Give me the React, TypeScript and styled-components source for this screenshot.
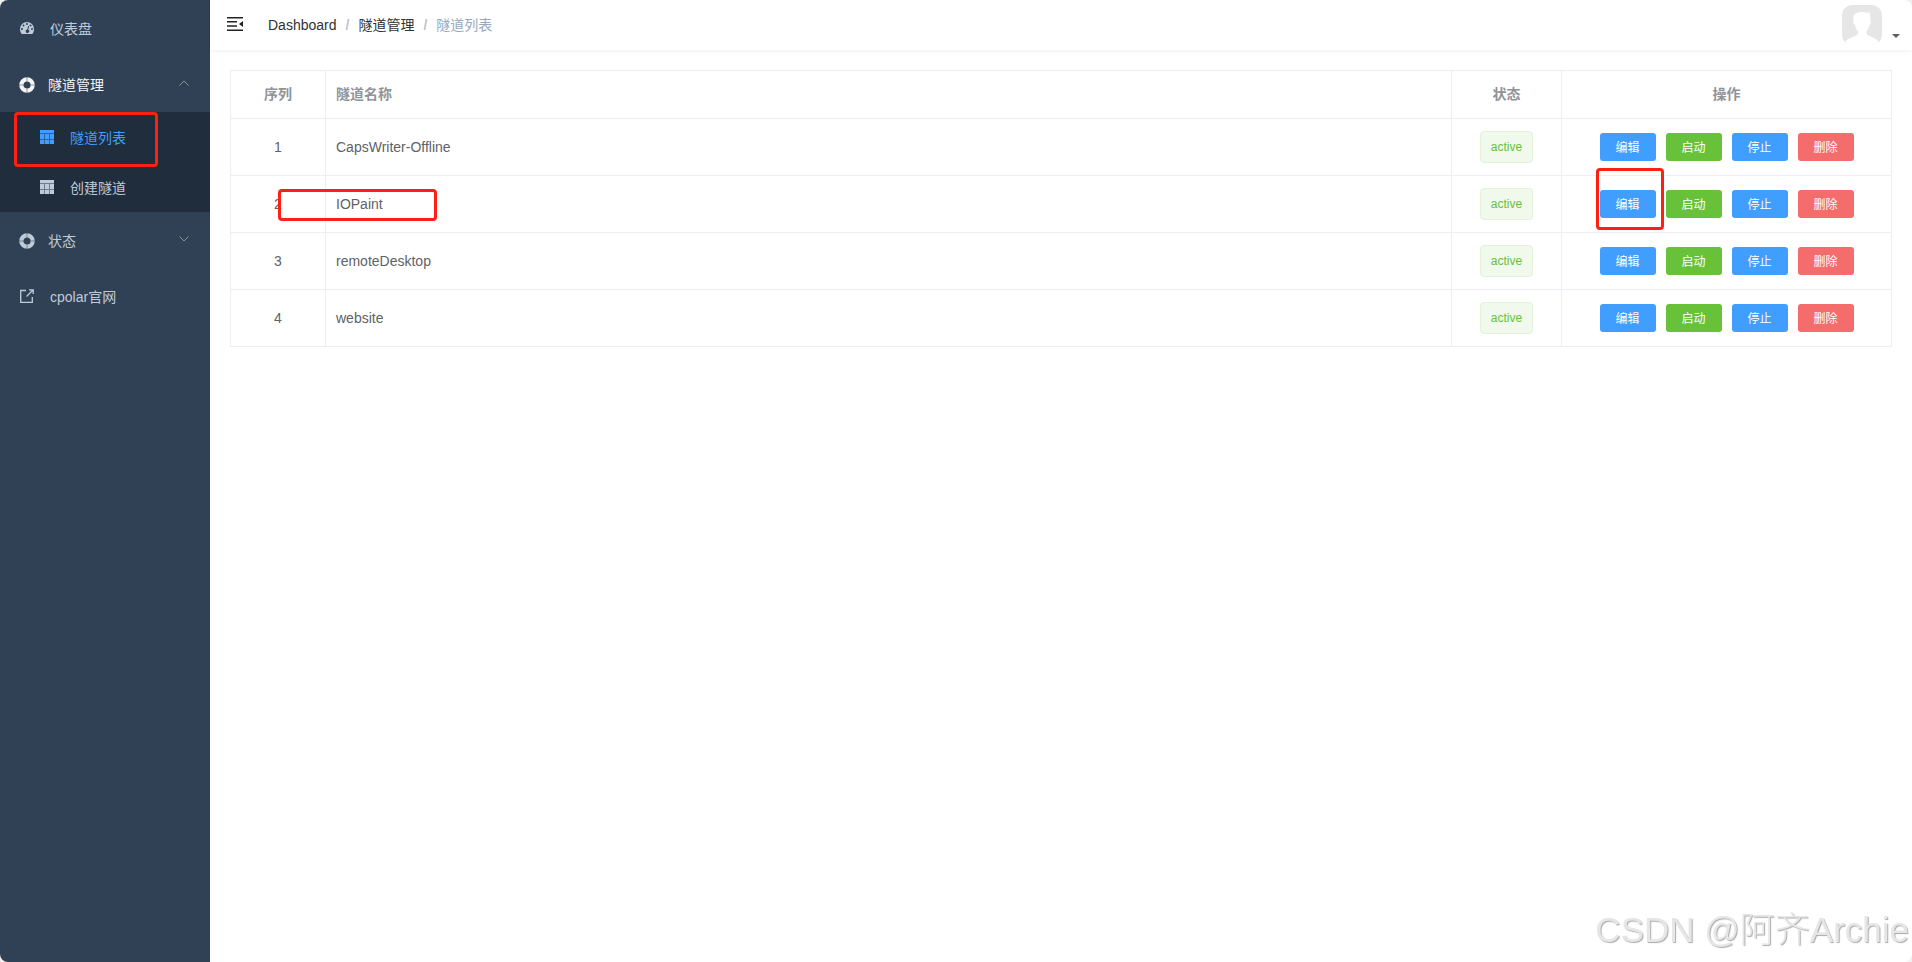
import React from "react";
import styled, { createGlobalStyle, css } from "styled-components";

const GlobalStyle = createGlobalStyle`
  *, *::before, *::after { box-sizing: border-box; }
  body {
    margin: 0;
    background: #f0f0f0;
    color: #606266;
    font-family: "Liberation Sans", "Noto Sans CJK SC", sans-serif;
    font-size: 14px;
  }
`;

const Window = styled.div`
  display: flex;
  min-height: 100vh;
  background: #fff;
  border-radius: 8px;
  overflow: hidden;
`;

const Sidebar = styled.nav`
  flex: 0 0 210px;
  background: #304156;
`;

const MenuList = styled.ul`
  margin: 0;
  padding: 0;
  list-style: none;
`;

const SubMenu = styled(MenuList)`
  background: #1f2d3d;
`;

const MenuItem = styled.li`
  position: relative;
`;

const menuEntry = css<{ $bright?: boolean; $gap?: number }>`
  display: flex;
  align-items: center;
  gap: ${(p) => p.$gap ?? 16}px;
  width: 100%;
  height: 56px;
  padding: 2px 20px 0;
  border: 0;
  background: none;
  color: ${(p) => (p.$bright ? "#f4f4f5" : "#bfcbd9")};
  font: inherit;
  line-height: 20px;
  text-align: left;
  text-decoration: none;
  cursor: pointer;
`;

const MenuLink = styled.a<{ $bright?: boolean; $gap?: number }>`${menuEntry}`;
const MenuButton = styled.button<{ $bright?: boolean; $gap?: number }>`
  ${menuEntry}
  padding-left: 19px;
`;

const SubLink = styled.a<{ $active?: boolean }>`
  display: flex;
  align-items: center;
  gap: 16px;
  height: 50px;
  padding: 2px 20px 0 40px;
  color: ${(p) => (p.$active ? "#409eff" : "#bfcbd9")};
  line-height: 20px;
  text-decoration: none;
`;

const MenuIcon = styled.svg`
  width: 14px;
  height: 14px;
  margin-bottom: 2px;
`;

const Chevron = styled.svg`
  width: 10px;
  height: 6px;
  margin: 0 1px 4px auto;
  fill: none;
  stroke: #909399;
`;

const Main = styled.main`
  flex: 1;
  min-width: 0;
`;

const Navbar = styled.header`
  display: flex;
  align-items: center;
  height: 50px;
  padding: 0 12px 0 17px;
  box-shadow: 0 1px 4px rgba(0, 21, 41, 0.08);
`;

const IconButton = styled.button`
  display: flex;
  margin-bottom: 2px;
  padding: 0;
  border: 0;
  background: none;
  color: #222;
  cursor: pointer;
`;

const Breadcrumb = styled.ol`
  display: flex;
  margin: 0 auto 0 25px;
  padding: 0;
  list-style: none;
  line-height: 20px;
`;

const Crumb = styled.li`
  color: #97a8be;

  & + &::before {
    content: "/";
    margin: 0 9px;
    color: #c0c4cc;
    font-weight: 700;
  }

  a {
    color: #303133;
    text-decoration: none;
  }
`;

const UserMenu = styled.button`
  display: flex;
  align-items: flex-end;
  gap: 10px;
  padding: 0;
  border: 0;
  background: none;
  cursor: pointer;
`;

const Caret = styled.svg`
  width: 8px;
  height: 4px;
  margin-bottom: 7px;
  fill: #5a5e66;
`;

const Content = styled.section`
  padding: 20px;
`;

const Table = styled.table`
  width: 100%;
  border-collapse: collapse;
  table-layout: fixed;
  line-height: 23px;
`;

const Col = styled.col<{ $width?: number }>`
  width: ${(p) => (p.$width ? `${p.$width}px` : "auto")};
`;

const cell = css<{ $center?: boolean }>`
  padding: 0 10px;
  border: 1px solid #ebeef5;
  text-align: ${(p) => (p.$center ? "center" : "left")};
`;

const HeadCell = styled.th<{ $center?: boolean }>`
  ${cell}
  height: 48px;
  color: #909399;
  font-weight: 700;
`;

const Cell = styled.td<{ $center?: boolean }>`
  ${cell}
  position: relative;
  height: 57px;
`;

const Tag = styled.span`
  display: inline-block;
  height: 32px;
  padding: 0 10px;
  border: 1px solid #e1f3d8;
  border-radius: 4px;
  background: #f0f9eb;
  color: #67c23a;
  font-size: 12px;
  line-height: 30px;
  vertical-align: middle;
`;

const Actions = styled.div`
  display: flex;
  justify-content: center;
  gap: 10px;
`;

const ActionSlot = styled.div`
  position: relative;
`;

const tones = { primary: "#409eff", success: "#67c23a", danger: "#f56c6c" };

const ActionButton = styled.button<{ $tone: keyof typeof tones }>`
  display: block;
  width: 56px;
  height: 28px;
  padding: 2px 0 0;
  border: 0;
  border-radius: 3px;
  background: ${(p) => tones[p.$tone]};
  color: #fff;
  font: inherit;
  font-size: 12px;
  line-height: 12px;
  cursor: pointer;
`;

const Marker = styled.span<{ $inset: string }>`
  position: absolute;
  inset: ${(p) => p.$inset};
  z-index: 1;
  border: 3px solid #fe2014;
  border-radius: 4px;
  pointer-events: none;
`;

const NameMarker = styled(Marker)`
  width: 159px;
`;

const SubMarker = styled(Marker)`
  width: 144px;
`;

const Watermark = styled.div`
  position: fixed;
  right: 3px;
  bottom: 7px;
  color: #e6e6e6;
  font-family: "Liberation Sans", "Noto Sans CJK SC", sans-serif;
  font-size: 35px;
  font-weight: 300;
  line-height: 50px;
  text-shadow: 1px 1px 1px #aaa;
  white-space: nowrap;
  pointer-events: none;
`;

const GaugeIcon = () => (
  <MenuIcon viewBox="0 0 14 14" fill="currentColor" aria-hidden="true">
    <path
      fillRule="evenodd"
      d="M7 1a7 7 0 0 0-7 7c0 1.700.5 3.300 1.300 4.600.1.200.3.300.5.300h10.400c.2 0 .4-.1.500-.300A8 8 0 0 0 14 8a7 7 0 0 0-7-7zM7 2a1 1 0 1 1 0 2 1 1 0 0 1 0-2zM3.500 3.500a1 1 0 1 1 0 2 1 1 0 0 1 0-2zM2 7a1 1 0 1 1 0 2 1 1 0 0 1 0-2zM12 7a1 1 0 1 1 0 2 1 1 0 0 1 0-2zM10.500 3.500a1 1 0 1 1 0 2 1 1 0 0 1 0-2zM8.200 5l.9.200-.8 3.500a1.700 1.700 0 1 1-1-.2z"
    />
  </MenuIcon>
);

const BuoyIcon = () => (
  <svg width="16" height="16" viewBox="0 0 16 16" fill="none" aria-hidden="true">
    <circle cx="8" cy="8" r="5.700" stroke="currentColor" strokeWidth="4.200" />
    <path d="M8 0v4.500M8 11.500V16M0 8h4.500M11.500 8H16" stroke="#304156" strokeOpacity=".5" />
  </svg>
);

const GridIcon = () => (
  <MenuIcon viewBox="0 0 14 14" fill="currentColor" aria-hidden="true">
    <path d="M0 0h14v3H0zM0 4h4v5H0zM5 4h4v5H5zM10 4h4v5h-4zM0 10h4v4H0zM5 10h4v4H5zM10 10h4v4h-4z" />
    <path d="M0 0h14v14H0z" opacity=".5" />
  </MenuIcon>
);

const LinkIcon = () => (
  <MenuIcon viewBox="0 0 14 14" fill="none" stroke="currentColor" strokeWidth="1.300" aria-hidden="true">
    <path d="M6 1.500H.7v11.800h11.600V8M6.500 7.500l6-6M9 .8h4.200V5" />
  </MenuIcon>
);

const FoldIcon = () => (
  <svg width="16" height="14" viewBox="0 0 16 14" fill="currentColor" aria-hidden="true">
    <path d="M0 0h16v1.500H0zM0 4h10v1.500H0zM0 8.300h10v1.500H0zM0 12.500h16V14H0zM16 4v6l-4-3z" />
  </svg>
);

const Avatar = () => (
  <svg width="40" height="40" viewBox="0 0 40 40" role="img" aria-label="avatar">
    <defs>
      <clipPath id="avatar-shape">
        <rect width="40" height="40" rx="10" />
      </clipPath>
    </defs>
    <g clipPath="url(#avatar-shape)">
      <path fill="#e6e6e6" d="M0 0h40v40H0z" />
      <path
        fill="#fff"
        d="M11.500 16c-1-6 2-9 8.500-9 2.500 0 4 .8 5.500.8l2.500-.3c-.8 1.500.8 4.500.5 8.500.8.500.3 3.500-1 4-.5 3-2 5-3 6.500 0 2 .5 3.500 3 4.500 5 2 9 3 10 9H2.500c1-6 5.500-7 10.500-9 2.500-1 3-2.500 3-4.500-1.500-1.500-2.500-3.500-3-6.500-1.300-.5-2.300-3.500-1.500-4z"
      />
    </g>
  </svg>
);

const tunnels = ["CapsWriter-Offline", "IOPaint", "remoteDesktop", "website"];

const actions: { label: string; tone: keyof typeof tones }[] = [
  { label: "编辑", tone: "primary" },
  { label: "启动", tone: "success" },
  { label: "停止", tone: "primary" },
  { label: "删除", tone: "danger" },
];

export default function App() {
  return (
    <>
      <GlobalStyle />
      <Window>
        <Sidebar>
          <MenuList>
            <MenuItem>
              <MenuLink href="#dashboard"><GaugeIcon />仪表盘</MenuLink>
            </MenuItem>
            <MenuItem>
              <MenuButton $bright $gap={13} aria-expanded="true">
                <BuoyIcon />隧道管理
                <Chevron viewBox="0 0 10 6"><path d="M.5 5.500 5 1l4.500 4.500" /></Chevron>
              </MenuButton>
              <SubMenu>
                <MenuItem>
                  <SubLink href="#tunnels" $active aria-current="page"><GridIcon />隧道列表</SubLink>
                  <SubMarker $inset="0 auto -5px 14px" />
                </MenuItem>
                <MenuItem>
                  <SubLink href="#create"><GridIcon />创建隧道</SubLink>
                </MenuItem>
              </SubMenu>
            </MenuItem>
            <MenuItem>
              <MenuButton $gap={13} aria-expanded="false">
                <BuoyIcon />状态
                <Chevron viewBox="0 0 10 6"><path d="M.5.5 5 5 9.500.5" /></Chevron>
              </MenuButton>
            </MenuItem>
            <MenuItem>
              <MenuLink href="#official"><LinkIcon />cpolar官网</MenuLink>
            </MenuItem>
          </MenuList>
        </Sidebar>
        <Main>
          <Navbar>
            <IconButton aria-label="Toggle menu"><FoldIcon /></IconButton>
            <Breadcrumb>
              <Crumb><a href="#dashboard">Dashboard</a></Crumb>
              <Crumb><a href="#manage">隧道管理</a></Crumb>
              <Crumb>隧道列表</Crumb>
            </Breadcrumb>
            <UserMenu aria-label="User menu">
              <Avatar />
              <Caret viewBox="0 0 8 4"><path d="M0 0h8L4 4z" /></Caret>
            </UserMenu>
          </Navbar>
          <Content>
            <Table>
              <colgroup>
                <Col $width={95} /><Col /><Col $width={110} /><Col $width={330} />
              </colgroup>
              <thead>
                <tr>
                  <HeadCell $center>序列</HeadCell>
                  <HeadCell>隧道名称</HeadCell>
                  <HeadCell $center>状态</HeadCell>
                  <HeadCell $center>操作</HeadCell>
                </tr>
              </thead>
              <tbody>
                {tunnels.map((name, row) => (
                  <tr key={name}>
                    <Cell $center>{row + 1}</Cell>
                    <Cell>
                      {name}
                      {name === "IOPaint" && <NameMarker $inset="13px auto 11px -48px" />}
                    </Cell>
                    <Cell $center><Tag>active</Tag></Cell>
                    <Cell $center>
                      <Actions>
                        {actions.map(({ label, tone }, i) => (
                          <ActionSlot key={label}>
                            <ActionButton $tone={tone}>{label}</ActionButton>
                            {name === "IOPaint" && i === 0 && <Marker $inset="-22px -8px -12px -4px" />}
                          </ActionSlot>
                        ))}
                      </Actions>
                    </Cell>
                  </tr>
                ))}
              </tbody>
            </Table>
          </Content>
        </Main>
      </Window>
      <Watermark>CSDN @阿齐Archie</Watermark>
    </>
  );
}
